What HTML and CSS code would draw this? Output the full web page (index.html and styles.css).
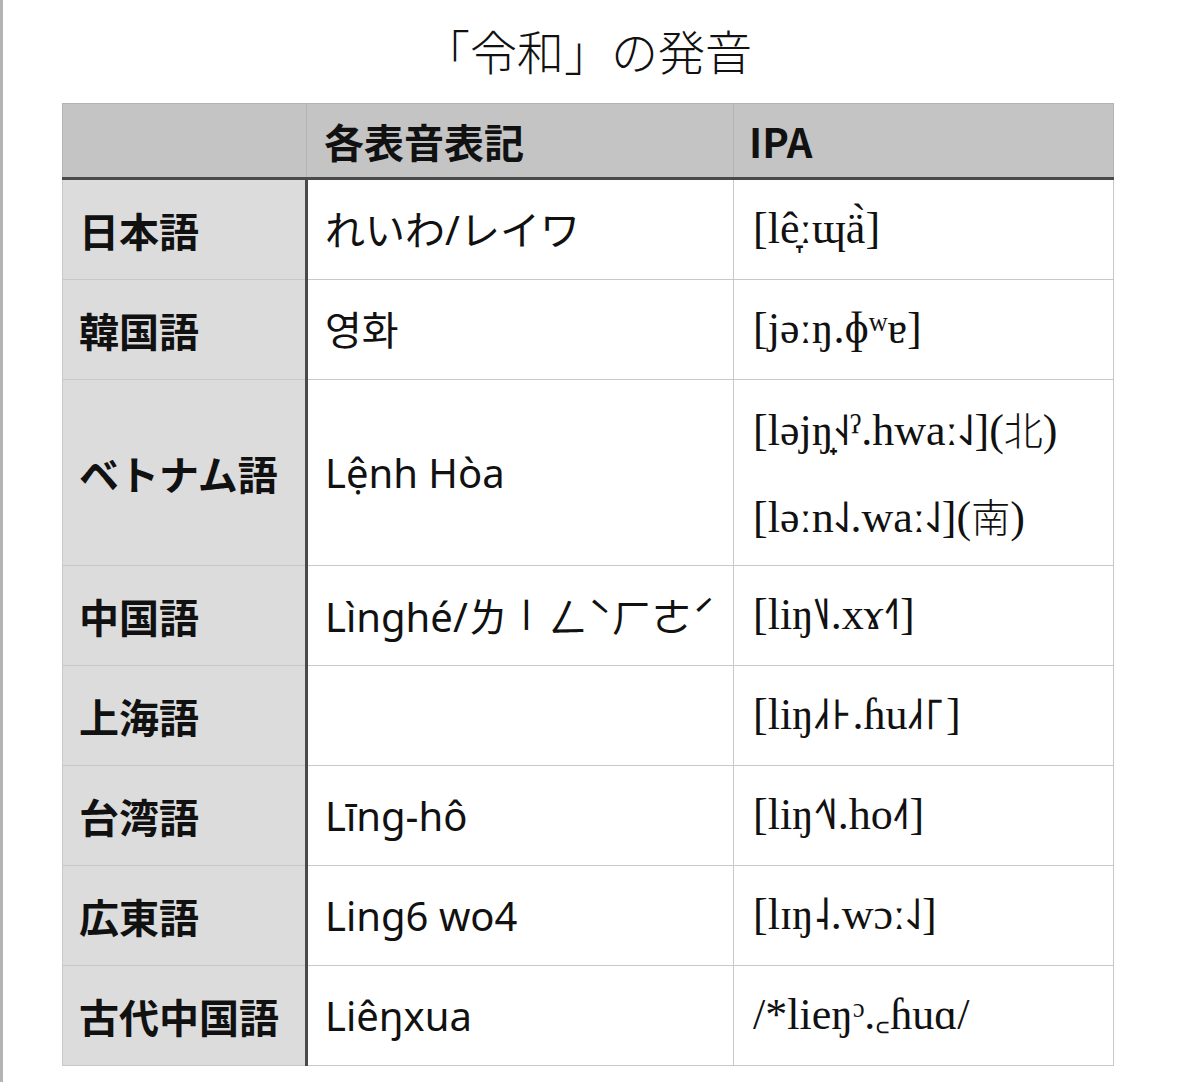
FILE: index.html
```html
<!DOCTYPE html>
<html lang="ja">
<head>
<meta charset="utf-8">
<title>「令和」の発音</title>
<link rel="stylesheet" href="styles.css">
</head>
<body>
<div class="page">
  <h1 class="title">「令和」の発音</h1>
  <table class="pron">
    <colgroup>
      <col class="c-lang">
      <col class="c-note">
      <col class="c-ipa">
    </colgroup>
    <thead>
      <tr>
        <th class="h-blank"></th>
        <th>各表音表記</th>
        <th class="h-ipa">IPA</th>
      </tr>
    </thead>
    <tbody>
      <tr>
        <th class="lang">日本語</th>
        <td class="note">れいわ/レイワ</td>
        <td class="ipa">[lê̞ːɰä̀]</td>
      </tr>
      <tr>
        <th class="lang">韓国語</th>
        <td class="note">영화</td>
        <td class="ipa">[jəːŋ.ɸʷɐ]</td>
      </tr>
      <tr class="tall">
        <th class="lang">ベトナム語</th>
        <td class="note">Lệnh Hòa</td>
        <td class="ipa">
          <div class="ipa-line">[ləjŋ̟˧˨ˀ.hwaː˨˩](<span class="cjk">北</span>)</div>
          <div class="ipa-line">[ləːn˨˩.waː˨˩](<span class="cjk">南</span>)</div>
        </td>
      </tr>
      <tr>
        <th class="lang">中国語</th>
        <td class="note">Lìnghé/<span class="bpmf">ㄌ<span class="bpmf-i">ㄧ</span>ㄥˋㄏㄜˊ</span></td>
        <td class="ipa">[liŋ˥˩.xɤ˧˥]</td>
      </tr>
      <tr>
        <th class="lang">上海語</th>
        <td class="note"></td>
        <td class="ipa">[liŋ˩˧꜔.ɦu˩˧꜒]</td>
      </tr>
      <tr>
        <th class="lang">台湾語</th>
        <td class="note">Līng-hô</td>
        <td class="ipa">[liŋ˧˥˩.ho˨˦]</td>
      </tr>
      <tr>
        <th class="lang">広東語</th>
        <td class="note">Ling6 wo4</td>
        <td class="ipa">[lɪŋ˨.wɔː˨˩]</td>
      </tr>
      <tr>
        <th class="lang">古代中国語</th>
        <td class="note">Liêŋxua</td>
        <td class="ipa">/*lieŋᵓ.꜀ɦuɑ/</td>
      </tr>
    </tbody>
  </table>
</div>
</body>
</html>
```

FILE: styles.css
```css
html, body {
  margin: 0;
  padding: 0;
  background: #ffffff;
}

body {
  min-height: 1082px;
  box-sizing: border-box;
  border-left: 3px solid #b4b4b4;
  font-family: "Noto Sans CJK JP", "Noto Sans", sans-serif;
  color: #111111;
}

.page {
  padding: 20px 0 0 59px;
}

.title {
  margin: 0;
  width: 1051px;
  text-align: center;
  font-size: 47px;
  font-weight: 300;
  line-height: 60px;
  height: 60px;
  color: #111111;
}

.pron {
  margin-top: 23px;
  border-collapse: collapse;
  table-layout: fixed;
  width: 1051px;
  font-size: 40px;
}

.c-lang { width: 244px; }
.c-note { width: 427px; }
.c-ipa  { width: 380px; }

.pron thead th {
  background: #c3c4c3;
  height: 73px;
  padding: 0 17px;
  text-align: left;
  font-weight: 700;
  border: 1px solid #b4b4b4;
  border-bottom: 3px solid #4a4a4a;
  line-height: 1;
}

.pron .h-ipa {
  padding-left: 15px;
}

.pron tbody td,
.pron tbody th {
  height: 99px;
  border: 1px solid #c8c8c8;
  padding: 0 16px;
  vertical-align: middle;
  text-align: left;
  line-height: 1.2;
}

.pron tbody .tall td,
.pron tbody .tall th {
  height: 185px;
}

.pron .lang {
  background: #dcdcdc;
  font-weight: 700;
  border-right: 3px solid #4a4a4a;
  white-space: nowrap;
}

.pron .note {
  font-family: "Noto Sans", "Noto Sans CJK JP", "Noto Sans CJK KR", sans-serif;
  font-weight: 400;
  white-space: nowrap;
  padding-left: 17px;
}

.bpmf {
  font-family: "Noto Sans CJK TC", "Noto Sans CJK JP", sans-serif;
  font-weight: 400;
}

.bpmf-i {
  display: inline-block;
  transform: rotate(90deg);
}

.pron .ipa {
  font-family: "Liberation Serif", "DejaVu Serif", serif;
  font-size: 44px;
  padding-left: 19px;
  white-space: nowrap;
}

.ipa-line {
  line-height: 85px;
}

.cjk {
  font-family: "Noto Sans CJK JP", sans-serif;
  font-weight: 300;
  font-size: 39px;
}
```
